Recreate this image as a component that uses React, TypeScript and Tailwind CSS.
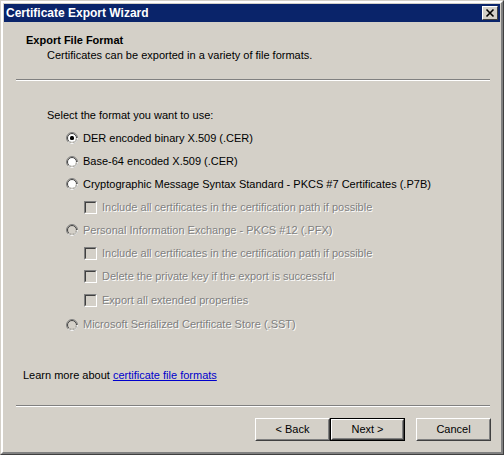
const FONT = "font-['Liberation_Sans',Arial,sans-serif]";

function Radio({ checked, disabled }: { checked?: boolean; disabled?: boolean }) {
  return (
    <svg width="12" height="12" viewBox="0 0 12 12" className="shrink-0">
      <circle cx="6" cy="6" r="5.5" fill="none" stroke="#808080" />
      <path d="M11.5 6a5.5 5.5 0 0 1-5.5 5.5 5.5 5.5 0 0 1-3.9-1.6" stroke="#ffffff" fill="none" />
      <circle cx="6" cy="6" r="4.5" fill={disabled ? "#d4d0c8" : "#ffffff"} stroke="#404040" />
      <path d="M10.5 6a4.5 4.5 0 0 1-4.5 4.5 4.5 4.5 0 0 1-3.2-1.3" stroke="#d4d0c8" fill="none" />
      {checked && <rect x="4" y="4" width="4" height="4" rx="1.5" fill="#000" />}
    </svg>
  );
}

function Check() {
  return (
    <span className="box-border flex h-[13px] w-[13px] shrink-0 border border-t-[#808080] border-l-[#808080] border-r-white border-b-white">
      <span className="block h-full w-full border border-t-[#404040] border-l-[#404040] border-r-[#d4d0c8] border-b-[#d4d0c8] bg-[#d4d0c8]" />
    </span>
  );
}

const dim = "text-[#808080] [text-shadow:1px_1px_0_#ffffff]";

type Row = { kind: "radio" | "check"; label: string; h: string; checked?: boolean; disabled?: boolean };

const rows: Row[] = [
  { kind: "radio", label: "DER encoded binary X.509 (.CER)", h: "h-[24px]", checked: true },
  { kind: "radio", label: "Base-64 encoded X.509 (.CER)", h: "h-[23px]" },
  { kind: "radio", label: "Cryptographic Message Syntax Standard - PKCS #7 Certificates (.P7B)", h: "h-[22px]" },
  { kind: "check", label: "Include all certificates in the certification path if possible", h: "h-[24px]", disabled: true },
  { kind: "radio", label: "Personal Information Exchange - PKCS #12 (.PFX)", h: "h-[22px]", disabled: true },
  { kind: "check", label: "Include all certificates in the certification path if possible", h: "h-[24px]", disabled: true },
  { kind: "check", label: "Delete the private key if the export is successful", h: "h-[23px]", disabled: true },
  { kind: "check", label: "Export all extended properties", h: "h-[25px]", disabled: true },
  { kind: "radio", label: "Microsoft Serialized Certificate Store (.SST)", h: "h-[23px]", disabled: true },
];

function Button({ label, isDefault }: { label: string; isDefault?: boolean }) {
  return (
    <button
      className={`box-border flex h-[23px] w-[75px] items-stretch p-0 ${
        isDefault ? "border border-black" : ""
      }`}
    >
      <span className="flex flex-1 border border-t-white border-l-white border-r-[#404040] border-b-[#404040]">
        <span className="flex flex-1 items-center justify-center border border-t-[#d4d0c8] border-l-[#d4d0c8] border-r-[#808080] border-b-[#808080] text-[11px] text-black">
          {label}
        </span>
      </span>
    </button>
  );
}

function Separator() {
  return (
    <div className="ml-[12px] mr-[10px] flex flex-col">
      <div className="h-px bg-[#808080]" />
      <div className="h-px bg-white" />
    </div>
  );
}

export default function App() {
  return (
    <div className={`${FONT} box-border flex h-[455px] w-[504px] flex-col bg-[#3a6ea5] text-[11px] leading-[13px] text-black`}>
      <div className="box-border flex flex-1 flex-col border border-t-[#d4d0c8] border-l-[#d4d0c8] border-r-[#404040] border-b-[#404040]">
        <div className="box-border flex flex-1 flex-col border-2 border-t-white border-l-white border-r-[#808080] border-b-[#808080] bg-[#d4d0c8] px-px pt-px">
          {/* title bar */}
          <div className="flex h-[18px] items-center justify-between bg-[#0a246a] pl-[2px] pr-[2px]">
            <span className="text-[12px] font-bold text-white">Certificate Export Wizard</span>
            <span className="box-border flex h-[14px] w-[16px] border border-t-white border-l-white border-r-[#404040] border-b-[#404040] bg-[#d4d0c8]">
              <svg width="14" height="12" viewBox="0 0 14 12" className="block">
                <path d="M3.5 2.5l7 7M10.5 2.5l-7 7" stroke="#000" strokeWidth="1.6" />
              </svg>
            </span>
          </div>

          {/* header */}
          <div className="flex flex-col pt-[12px]">
            <div className="pl-[22px] font-bold">Export File Format</div>
            <div className="pl-[43px] pt-[2px]">Certificates can be exported in a variety of file formats.</div>
          </div>
          <div className="pt-[17px]">
            <Separator />
          </div>

          {/* body */}
          <div className="flex flex-col pl-[43px] pt-[28px]">
            <div>Select the format you want to use:</div>
            <div className="flex flex-col pt-[4px]">
              {rows.map((r, i) => (
                <div key={i} className={`flex ${r.h} items-center ${r.kind === "radio" ? "pl-[19px]" : "pl-[37px]"}`}>
                  {r.kind === "radio" ? <Radio checked={r.checked} disabled={r.disabled} /> : <Check />}
                  <span className={`pl-[5px] ${r.disabled ? dim : ""}`}>{r.label}</span>
                </div>
              ))}
            </div>
          </div>

          <div className="pl-[19px] pt-[33px]">
            Learn more about <span className="text-[#0000cc] underline">certificate file formats</span>
          </div>

          <div className="pt-[23px]">
            <Separator />
          </div>

          <div className="flex justify-end gap-[11px] pr-[9px] pt-[11px]">
            <div className="flex">
              <Button label="< Back" />
              <Button label="Next >" isDefault />
            </div>
            <Button label="Cancel" />
          </div>
        </div>
      </div>
    </div>
  );
}
